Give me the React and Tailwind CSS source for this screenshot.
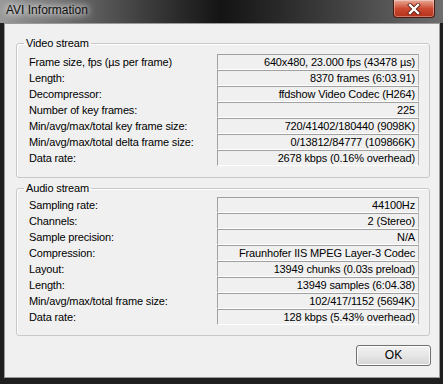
import React from "react";

const video = [
  ["Frame size, fps (µs per frame)", "640x480, 23.000 fps (43478 µs)"],
  ["Length:", "8370 frames (6:03.91)"],
  ["Decompressor:", "ffdshow Video Codec (H264)"],
  ["Number of key frames:", "225"],
  ["Min/avg/max/total key frame size:", "720/41402/180440 (9098K)"],
  ["Min/avg/max/total delta frame size:", "0/13812/84777 (109866K)"],
  ["Data rate:", "2678 kbps (0.16% overhead)"],
];

const audio = [
  ["Sampling rate:", "44100Hz"],
  ["Channels:", "2 (Stereo)"],
  ["Sample precision:", "N/A"],
  ["Compression:", "Fraunhofer IIS MPEG Layer-3 Codec"],
  ["Layout:", "13949 chunks (0.03s preload)"],
  ["Length:", "13949 samples (6:04.38)"],
  ["Min/avg/max/total frame size:", "102/417/1152 (5694K)"],
  ["Data rate:", "128 kbps (5.43% overhead)"],
];

function Row({ label, value }) {
  return (
    <div className="flex h-[16px]">
      <div className="w-[188px] leading-[16px] whitespace-nowrap">{label}</div>
      <div className="w-[202px] h-[16px] border-t border-l border-r border-b border-t-[#a0a0a0] border-l-[#a0a0a0] border-r-[#b4b4b4] border-b-white text-right pr-[3px] leading-[14px] whitespace-nowrap">
        {value}
      </div>
    </div>
  );
}

function Group({ title, rows, className, pt, pb }) {
  return (
    <fieldset
      className={`ml-[11px] w-[414px] border border-[#c8c8c8] rounded-[3px] p-0 shadow-[inset_1px_1px_0_#ffffff] ${className}`}
    >
      <legend className="ml-[7px] px-[2px] leading-[14px]">{title}</legend>
      <div className={`pl-[12px] ${pt} ${pb}`}>
        {rows.map(([l, v], i) => (
          <Row key={i} label={l} value={v} />
        ))}
      </div>
    </fieldset>
  );
}

export default function App() {
  return (
    <div className="w-[443px] h-[384px] bg-[#1f1f1f] flex flex-col font-['Liberation_Sans',Arial,sans-serif] text-[11px] tracking-[-0.15px] text-black overflow-hidden">
      <div className="h-[23px] flex items-start justify-between bg-linear-to-r from-[#9a9a9a] via-[#141414] via-50% to-[#6e6e6e]">
        <div className="pl-[6px] pt-[3px] text-[12px] tracking-normal leading-[15px] text-[#111] [text-shadow:0_0_6px_#ffffff,0_0_10px_#ffffff]">
          AVI Information
        </div>
        <div className="mr-[8px] w-[42px] h-[18px] rounded-b-[4px] border border-t-0 border-[#4a1a10] bg-linear-to-b from-[#e8a898] via-[#cc4a30] to-[#b5301a] flex items-center justify-center shadow-[inset_0_0_0_1px_rgba(255,255,255,0.35)]">
          <svg width="14" height="12" viewBox="0 0 14 12">
            <path d="M3 2 L11 10 M11 2 L3 10" stroke="#5a1a10" strokeWidth="4" strokeLinecap="square" />
            <path d="M3 2 L11 10 M11 2 L3 10" stroke="#ffffff" strokeWidth="2.4" strokeLinecap="square" />
          </svg>
        </div>
      </div>
      <div className="ml-[4px] w-[436px] h-[355px] bg-[#f0f0f0] border border-[#9a9a9a] flex flex-col">
        <Group title="Video stream" rows={video} className="mt-[12px]" pt="pt-[4px]" pb="pb-[11px]" />
        <Group title="Audio stream" rows={audio} className="mt-[3px]" pt="pt-[2px]" pb="pb-[10px]" />
        <div className="flex justify-end pr-[8px] mt-[9px]">
          <button className="w-[75px] h-[21px] rounded-[3px] border border-[#707070] bg-linear-to-b from-[#f2f2f2] via-[#e6e6e6] to-[#d4d4d4] text-[12px] tracking-normal leading-[19px] shadow-[inset_0_0_0_1px_#fcfcfc]">
            OK
          </button>
        </div>
      </div>
    </div>
  );
}
